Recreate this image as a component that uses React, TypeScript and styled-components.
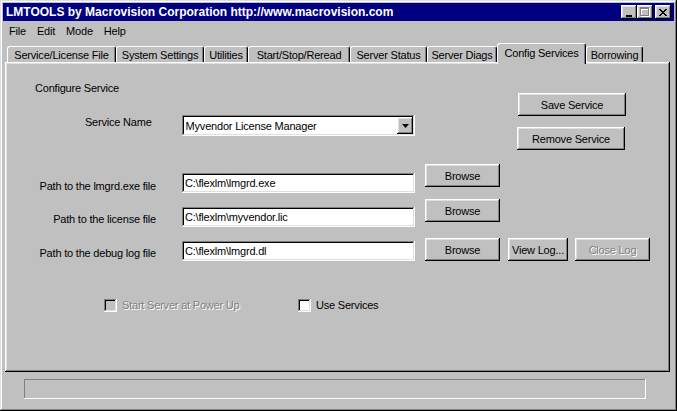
import React from "react";
import styled, { createGlobalStyle, css } from "styled-components";

const GlobalStyle = createGlobalStyle`
  html, body {
    margin: 0;
    padding: 0;
    background: #c0c0c0;
  }
  body {
    font-family: "Liberation Sans", Arial, sans-serif;
    font-size: 11px;
  }
`;

const raised = css`
  box-shadow: inset -1px -1px #000, inset 1px 1px #fff, inset -2px -2px #808080,
    inset 2px 2px #dfdfdf;
`;

const sunken = css`
  box-shadow: inset -1px -1px #fff, inset 1px 1px #808080, inset -2px -2px #dfdfdf,
    inset 2px 2px #000;
`;

const Window = styled.div`
  width: 677px;
  height: 411px;
  box-sizing: border-box;
  padding: 3px;
  background: #c0c0c0;
  color: #000;
  letter-spacing: -0.2px;
  display: flex;
  flex-direction: column;
  box-shadow: inset -1px -1px #000, inset 1px 1px #dfdfdf, inset -2px -2px #808080,
    inset 2px 2px #fff;
`;

const TitleBar = styled.div`
  height: 18px;
  flex: 0 0 18px;
  background: #000080;
  color: #fff;
  font-size: 12px;
  font-weight: bold;
  letter-spacing: 0;
  display: flex;
  align-items: center;
  padding: 0 3px 0 3px;
`;

const TitleButtons = styled.div`
  margin-left: auto;
  display: flex;
`;

const TitleButton = styled.div<{ $gap?: number }>`
  width: 16px;
  height: 14px;
  margin-left: ${(p) => p.$gap ?? 0}px;
  background: #c0c0c0;
  ${raised};
  display: flex;
  align-items: center;
  justify-content: center;
  svg {
    display: block;
    shape-rendering: crispEdges;
  }
`;

const MenuBar = styled.div`
  height: 19px;
  flex: 0 0 19px;
  display: flex;
  align-items: center;
  gap: 11px;
  padding-left: 6px;
`;

const TabStrip = styled.div`
  height: 22px;
  flex: 0 0 22px;
  display: flex;
  align-items: flex-end;
  padding-left: 4px;
  position: relative;
  z-index: 2;
`;

const Tab = styled.div<{ $w: number; $active?: boolean }>`
  position: relative;
  box-sizing: border-box;
  width: ${(p) => p.$w}px;
  height: ${(p) => (p.$active ? 21 : 16)}px;
  margin-bottom: ${(p) => (p.$active ? -2 : 0)}px;
  padding-bottom: ${(p) => (p.$active ? 3 : 0)}px;
  background: #c0c0c0;
  border: 1px solid #fff;
  border-bottom: none;
  border-right-color: #000;
  border-radius: 3px 3px 0 0;
  box-shadow: inset -1px 0 #808080;
  display: flex;
  align-items: center;
  justify-content: center;
  white-space: nowrap;
`;

const Panel = styled.div`
  flex: 0 0 310px;
  height: 310px;
  box-sizing: border-box;
  margin: 0 4px 0 2px;
  padding: 2px;
  ${raised};
  display: flex;
  flex-direction: column;
`;

const TopSection = styled.div`
  display: flex;
`;

const LeftColumn = styled.div`
  width: 408px;
  display: flex;
  flex-direction: column;
`;

const Heading = styled.div`
  margin: 18px 0 0 28px;
  line-height: 13px;
`;

const ServiceRow = styled.div`
  display: flex;
  align-items: flex-start;
  margin-top: 20px;
`;

const Label = styled.div<{ $w: number; $top: number }>`
  width: ${(p) => p.$w}px;
  margin-top: ${(p) => p.$top}px;
  line-height: 13px;
  text-align: right;
  white-space: nowrap;
`;

const Combo = styled.div`
  margin-left: 30px;
  width: 234px;
  height: 21px;
  box-sizing: border-box;
  padding: 2px;
  background: #fff;
  ${sunken};
  display: flex;
  align-items: center;
`;

const ComboText = styled.span`
  flex: 1;
  padding-left: 2px;
`;

const ComboArrow = styled.div`
  width: 16px;
  height: 17px;
  background: #c0c0c0;
  ${raised};
  display: flex;
  align-items: center;
  justify-content: center;
`;

const RightColumn = styled.div`
  margin-left: 103px;
  display: flex;
  flex-direction: column;
`;

const Button = styled.button<{ $w: number; $top?: number; $left?: number }>`
  width: ${(p) => p.$w}px;
  height: 23px;
  margin: ${(p) => p.$top ?? 0}px 0 0 ${(p) => p.$left ?? 0}px;
  padding: 0;
  border: none;
  background: #c0c0c0;
  font: inherit;
  letter-spacing: inherit;
  color: #000;
  ${raised};
  &:disabled {
    color: #808080;
    text-shadow: 1px 1px #fff;
  }
`;

const FieldRow = styled.div<{ $top: number }>`
  display: flex;
  align-items: flex-start;
  margin-top: ${(p) => p.$top}px;
`;

const PathInput = styled.input<{ $top: number }>`
  margin: ${(p) => p.$top}px 0 0 26px;
  width: 233px;
  height: 20px;
  box-sizing: border-box;
  border: none;
  outline: none;
  padding: 2px 3px 2px 3px;
  background: #fff;
  font: inherit;
  letter-spacing: inherit;
  color: #000;
  ${sunken};
`;

const BrowseGroup = styled.div`
  display: flex;
  margin-left: 10px;
`;

const CheckRow = styled.div`
  display: flex;
  margin-top: 38px;
  padding-left: 97px;
`;

const CheckItem = styled.label<{ $w?: number; $disabled?: boolean }>`
  display: flex;
  align-items: center;
  gap: 5px;
  width: ${(p) => (p.$w ? `${p.$w}px` : "auto")};
  line-height: 13px;
  color: ${(p) => (p.$disabled ? "#808080" : "#000")};
  text-shadow: ${(p) => (p.$disabled ? "1px 1px #fff" : "none")};
`;

const CheckBox = styled.span<{ $disabled?: boolean }>`
  width: 13px;
  height: 13px;
  box-sizing: border-box;
  background: ${(p) => (p.$disabled ? "#c0c0c0" : "#fff")};
  ${sunken};
`;

const StatusBar = styled.div`
  margin: 7px 0 0 21px;
  width: 622px;
  height: 20px;
  box-sizing: border-box;
  box-shadow: inset -1px -1px #fff, inset 1px 1px #808080;
`;

const tabs = [
  { label: "Service/License File", w: 109 },
  { label: "System Settings", w: 88 },
  { label: "Utilities", w: 44 },
  { label: "Start/Stop/Reread", w: 102 },
  { label: "Server Status", w: 77 },
  { label: "Server Diags", w: 70 },
  { label: "Config Services", w: 89, active: true },
  { label: "Borrowing", w: 57 },
];

const closePixels = [
  [0, 0], [1, 0], [6, 0], [7, 0],
  [1, 1], [2, 1], [5, 1], [6, 1],
  [2, 2], [3, 2], [4, 2], [5, 2],
  [3, 3], [4, 3],
  [2, 4], [3, 4], [4, 4], [5, 4],
  [1, 5], [2, 5], [5, 5], [6, 5],
  [0, 6], [1, 6], [6, 6], [7, 6],
];

const App = () => {
  return (
    <>
      <GlobalStyle />
      <Window>
        <TitleBar>
          <span>LMTOOLS by Macrovision Corporation http://www.macrovision.com</span>
          <TitleButtons>
            <TitleButton>
              <svg width="8" height="9" viewBox="0 0 8 9">
                <rect x="1" y="7" width="6" height="2" fill="#000" />
              </svg>
            </TitleButton>
            <TitleButton>
              <svg width="10" height="10" viewBox="0 0 10 10">
                <path d="M1 1h9v9H1z M2 3v6h7V3z" fill="#fff" fillRule="evenodd" />
                <path d="M0 0h9v9H0z M1 2v6h7V2z" fill="#808080" fillRule="evenodd" />
              </svg>
            </TitleButton>
            <TitleButton $gap={2}>
              <svg width="8" height="7" viewBox="0 0 8 7">
                {closePixels.map(([x, y]) => (
                  <rect key={`${x}-${y}`} x={x} y={y} width="1" height="1" fill="#000" />
                ))}
              </svg>
            </TitleButton>
          </TitleButtons>
        </TitleBar>

        <MenuBar>
          <span>File</span>
          <span>Edit</span>
          <span>Mode</span>
          <span>Help</span>
        </MenuBar>

        <TabStrip>
          {tabs.map((t) => (
            <Tab key={t.label} $w={t.w} $active={t.active}>
              {t.label}
            </Tab>
          ))}
        </TabStrip>

        <Panel>
          <TopSection>
            <LeftColumn>
              <Heading>Configure Service</Heading>
              <ServiceRow>
                <Label $w={145} $top={1}>
                  Service Name
                </Label>
                <Combo>
                  <ComboText>Myvendor License Manager</ComboText>
                  <ComboArrow>
                    <svg width="7" height="4" viewBox="0 0 7 4">
                      <path d="M0 0h7L3.5 4z" fill="#000" />
                    </svg>
                  </ComboArrow>
                </Combo>
              </ServiceRow>
            </LeftColumn>
            <RightColumn>
              <Button $w={108} $top={29}>
                Save Service
              </Button>
              <Button $w={108} $top={11} $left={-1}>
                Remove Service
              </Button>
            </RightColumn>
          </TopSection>

          <FieldRow $top={14}>
            <Label $w={149} $top={16}>
              Path to the lmgrd.exe file
            </Label>
            <PathInput $top={9} readOnly value="C:\flexlm\lmgrd.exe" />
            <BrowseGroup>
              <Button $w={75}>Browse</Button>
            </BrowseGroup>
          </FieldRow>

          <FieldRow $top={6}>
            <Label $w={149} $top={14}>
              Path to the license file
            </Label>
            <PathInput $top={8} readOnly value="C:\flexlm\myvendor.lic" />
            <BrowseGroup>
              <Button $w={75}>Browse</Button>
            </BrowseGroup>
          </FieldRow>

          <FieldRow $top={11}>
            <Label $w={149} $top={9}>
              Path to the debug log file
            </Label>
            <PathInput $top={3} readOnly value="C:\flexlm\lmgrd.dl" />
            <BrowseGroup>
              <Button $w={75}>Browse</Button>
              <Button $w={60} $left={8}>
                View Log...
              </Button>
              <Button $w={75} $left={7} disabled>
                Close Log
              </Button>
            </BrowseGroup>
          </FieldRow>

          <CheckRow>
            <CheckItem $w={194} $disabled>
              <CheckBox $disabled />
              Start Server at Power Up
            </CheckItem>
            <CheckItem>
              <CheckBox />
              Use Services
            </CheckItem>
          </CheckRow>
        </Panel>

        <StatusBar />
      </Window>
    </>
  );
};

export default App;
